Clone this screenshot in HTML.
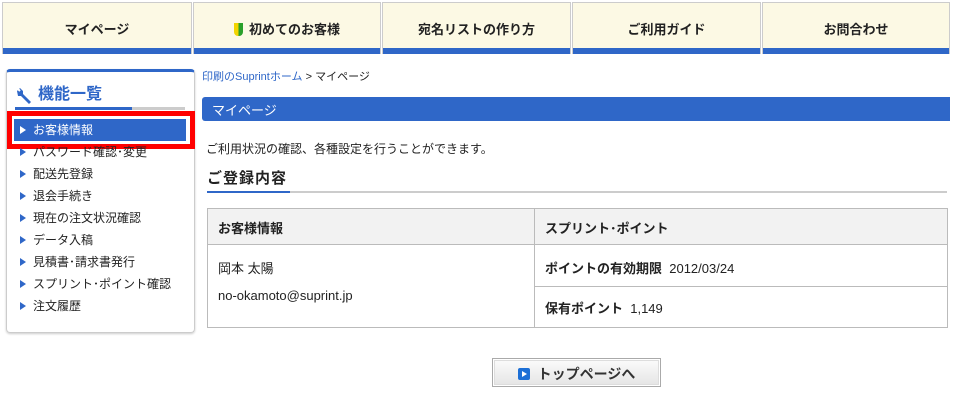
<!DOCTYPE html>
<html><head><meta charset="utf-8"><style>
*{margin:0;padding:0;box-sizing:border-box}
body{width:958px;height:400px;background:#fff;font-family:"Liberation Sans","Noto Sans CJK JP",sans-serif;font-size:13px;color:#222;position:relative;overflow:hidden}
.a{position:absolute}
.nav{top:2px;height:52px;background:#fcf9e4;border:1px solid #ccc;border-bottom:none}
.nav .t{position:absolute;left:0;right:0;top:16px;text-align:center;font-weight:bold;font-size:13px;color:#222}
.nav .b{position:absolute;left:0;right:0;bottom:0;height:6px;background:#2f67c8}
.item{position:absolute;left:20px;font-size:12px;color:#222;line-height:14px}
.item:before{content:"";display:inline-block;border-left:6px solid #2f67c8;border-top:4px solid transparent;border-bottom:4px solid transparent;margin-right:7px;vertical-align:0}
.item.w:before{border-left-color:#fff}
</style></head><body>
<div class="a nav" style="left:2px;width:190px"><div class="t">マイページ</div><div class="b"></div></div>
<div class="a nav" style="left:193px;width:188px"><div class="t"><span style="display:inline-block;width:9px;height:13px;background:linear-gradient(90deg,#f2d400 50%,#2aa02a 50%);vertical-align:-2px;margin-right:6px;border-radius:0 0 4px 4px"></span>初めてのお客様</div><div class="b"></div></div>
<div class="a nav" style="left:382px;width:189px"><div class="t">宛名リストの作り方</div><div class="b"></div></div>
<div class="a nav" style="left:572px;width:189px"><div class="t">ご利用ガイド</div><div class="b"></div></div>
<div class="a nav" style="left:762px;width:188px"><div class="t">お問合わせ</div><div class="b"></div></div>

<div class="a" style="left:6px;top:69px;width:189px;height:264px;border:1px solid #ccc;border-top:3px solid #2f67c8;border-radius:4px;box-shadow:0 1px 2px #ccc"></div>
<svg class="a" style="left:15px;top:87px" width="18" height="18" viewBox="0 0 18 18"><path d="M2 4 L5 1 L8 4 L8 7 L16 15 L14 17 L6 9 L3 9 Z" fill="#2f67c8"/><path d="M2 1 L5 4" stroke="#fff" stroke-width="2"/></svg>
<div class="a" style="left:38px;top:85px;font-size:16px;font-weight:bold;color:#2f67c8;line-height:20px">機能一覧</div>
<div class="a" style="left:15px;top:107px;width:170px;height:3px;background:#ccc"></div>
<div class="a" style="left:15px;top:107px;width:117px;height:3px;background:#2f67c8"></div>
<div class="a" style="left:14px;top:119px;width:172px;height:22px;background:#2f67c8"></div>
<div class="item w" style="top:123px;color:#fff">お客様情報</div>
<div class="a" style="left:7px;top:111px;width:188px;height:38px;border:5px solid #f00"></div>
<div class="item" style="top:145px">パスワード確認･変更</div>
<div class="item" style="top:167px">配送先登録</div>
<div class="item" style="top:189px">退会手続き</div>
<div class="item" style="top:211px">現在の注文状況確認</div>
<div class="item" style="top:233px">データ入稿</div>
<div class="item" style="top:255px">見積書･請求書発行</div>
<div class="item" style="top:277px">スプリント･ポイント確認</div>
<div class="item" style="top:299px">注文履歴</div>

<div class="a" style="left:202px;top:68px;font-size:11px"><span style="color:#2f67c8">印刷のSuprintホーム</span> &gt; マイページ</div>
<div class="a" style="left:202px;top:97px;width:748px;height:24px;background:#2f67c8;border-radius:3px 0 0 3px;color:#fff;font-size:13px;padding:3px 0 0 10px">マイページ</div>
<div class="a" style="left:206px;top:140px;font-size:12px">ご利用状況の確認、各種設定を行うことができます。</div>
<div class="a" style="left:207px;top:167px;font-size:15px;font-weight:bold;letter-spacing:1px">ご登録内容</div>
<div class="a" style="left:207px;top:191px;width:740px;height:2px;background:#ccc"></div>
<div class="a" style="left:207px;top:191px;width:83px;height:2px;background:#2f67c8"></div>

<div class="a" style="left:207px;top:208px;width:741px;height:120px;border:1px solid #bbb"></div>
<div class="a" style="left:208px;top:209px;width:739px;height:36px;background:#f2f2f2;border-bottom:1px solid #bbb"></div>
<div class="a" style="left:534px;top:209px;width:1px;height:118px;background:#bbb"></div>
<div class="a" style="left:535px;top:286px;width:412px;height:1px;background:#bbb"></div>
<div class="a" style="left:218px;top:218px;font-weight:bold">お客様情報</div>
<div class="a" style="left:545px;top:218px;font-weight:bold">スプリント･ポイント</div>
<div class="a" style="left:218px;top:258px">岡本 太陽</div>
<div class="a" style="left:218px;top:288px">no-okamoto@suprint.jp</div>
<div class="a" style="left:545px;top:258px"><b>ポイントの有効期限</b>&nbsp; 2012/03/24</div>
<div class="a" style="left:545px;top:298px"><b>保有ポイント</b>&nbsp; 1,149</div>

<div class="a" style="left:492px;top:358px;width:169px;height:29px;border:1px solid #aaa;padding:1px"><div style="height:100%;border:1px solid #ddd;background:linear-gradient(#fafafa,#e6e6e6);text-align:center;font-weight:bold;font-size:14px;padding-top:3px;color:#333"><span style="display:inline-block;width:12px;height:12px;background:#1c6fd6;border-radius:2px;vertical-align:-1px;margin-right:8px;position:relative"><span style="position:absolute;left:4px;top:3px;border-left:5px solid #fff;border-top:3px solid transparent;border-bottom:3px solid transparent"></span></span>トップページへ</div></div>
</body></html>
